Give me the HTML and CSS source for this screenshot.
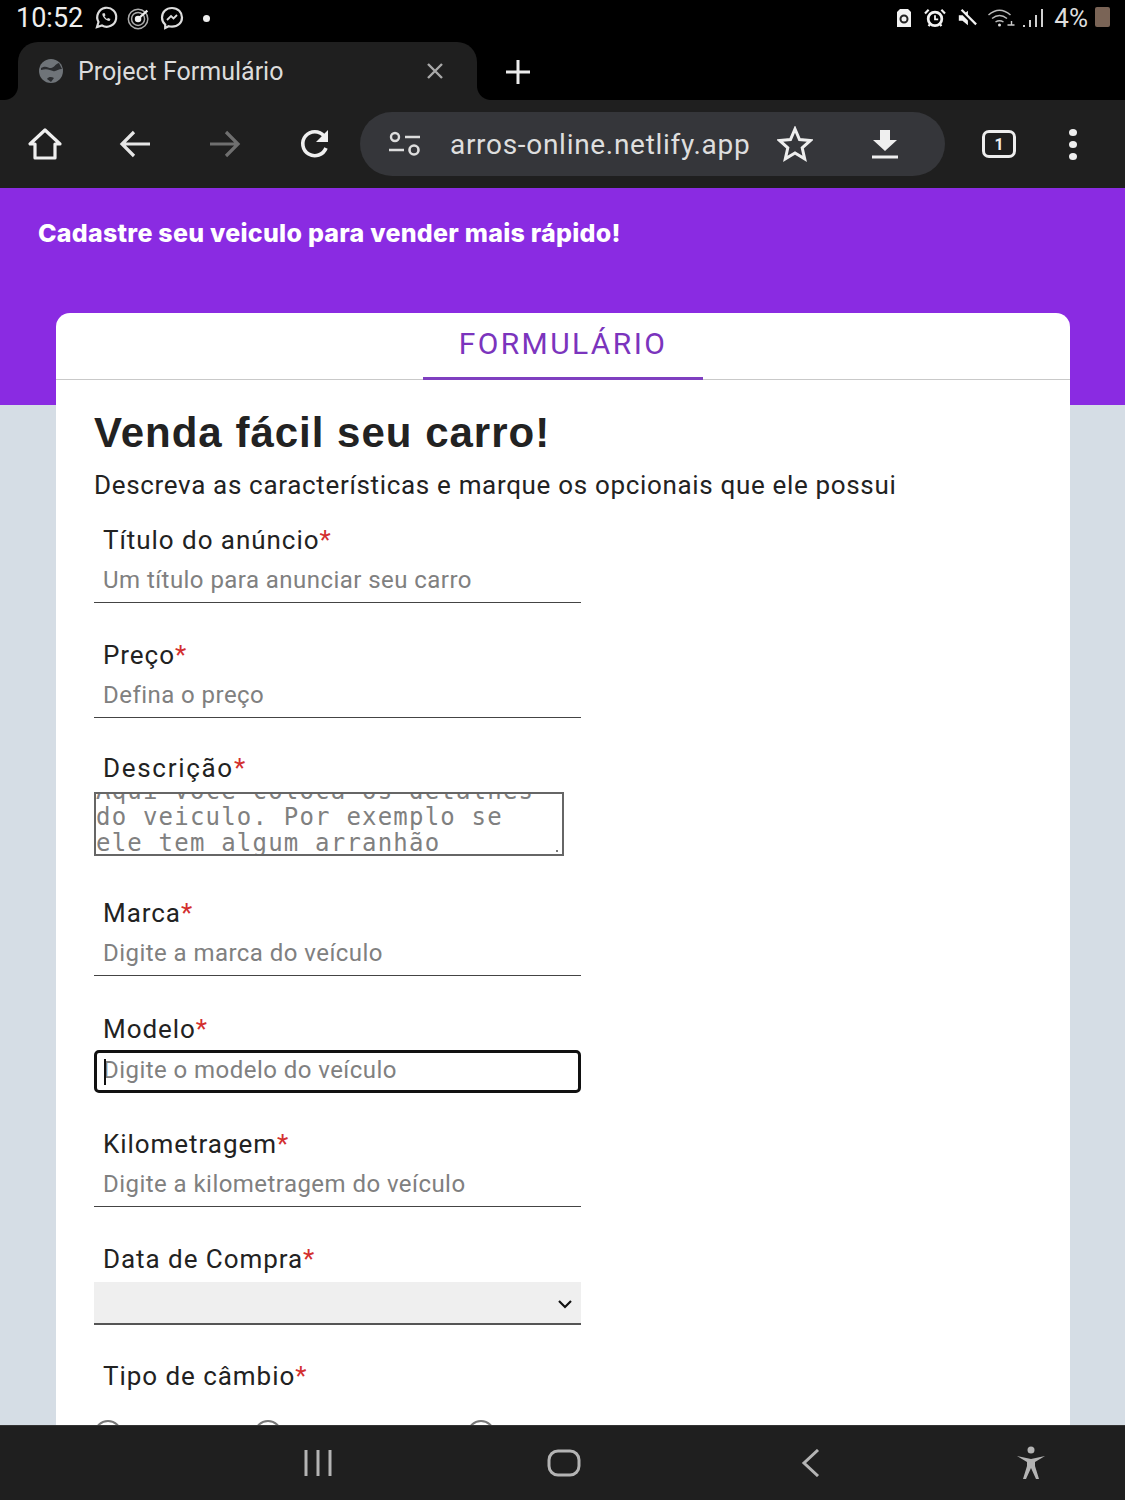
FILE: index.html
```html
<!DOCTYPE html>
<html lang="pt-BR">
<head>
<meta charset="utf-8">
<title>Project Formulário</title>
<link rel="stylesheet" href="styles.css">
</head>
<body>
<div class="screen">
  <header class="chrome">
    <div class="status">
      <div class="status-left">
        <span class="clock">10:52</span>
        <svg class="st-ic" viewBox="0 0 26 26"><path d="M4 22l1.500-5A9.500 9.500 0 1 1 9 20.500z" fill="none" stroke="#ddd" stroke-width="2.200"/><path d="M9.500 8.500c-1 2 3 7.500 7 7.500l1-2-2.500-1-1 1c-1-.5-2-1.500-2.500-2.700l1-1-1-2.300z" fill="#ddd"/></svg>
        <svg class="st-ic" viewBox="0 0 28 26"><circle cx="13" cy="14" r="10.500" fill="none" stroke="#aaa" stroke-width="1.600"/><circle cx="13" cy="14" r="7" fill="none" stroke="#aaa" stroke-width="1.600"/><circle cx="13" cy="14" r="3.500" fill="#eee"/><path d="M14 13l9-8" stroke="#eee" stroke-width="2.500"/></svg>
        <svg class="st-ic" viewBox="0 0 26 26"><path d="M13 3C7 3 3 7 3 12.500c0 3 1.200 5.300 3.200 7V23l3.500-1.800c1 .3 2.100.4 3.300.4 6 0 10-4 10-9.100S19 3 13 3z" fill="none" stroke="#ddd" stroke-width="2.200"/><path d="M8 15l4-4 2.500 2.500L18 10" fill="none" stroke="#ddd" stroke-width="1.800"/></svg>
        <span class="st-dot"></span>
      </div>
      <div class="status-right">
        <svg class="sr-ic" viewBox="0 0 18 20"><path d="M5 1h8l3 3v15H2V4z" fill="#f2f2f2"/><circle cx="9" cy="11" r="3.500" fill="none" stroke="#222" stroke-width="2"/></svg>
        <svg class="sr-ic sr-wide" viewBox="0 0 24 22"><circle cx="12" cy="12" r="7.500" fill="none" stroke="#f2f2f2" stroke-width="3"/><path d="M12 8v4.500h3.500" fill="none" stroke="#f2f2f2" stroke-width="2"/><path d="M1 6l4-4M23 6l-4-4M5 20l2-3M19 20l-2-3" stroke="#f2f2f2" stroke-width="2.400"/></svg>
        <svg class="sr-ic sr-wide" viewBox="0 0 24 22"><path d="M3 8h4l6-5v16l-6-5H3z" fill="#f2f2f2"/><path d="M4 2l18 18" stroke="#000" stroke-width="4"/><path d="M6 2l16 16" stroke="#f2f2f2" stroke-width="2.400"/></svg>
        <svg class="sr-ic sr-wifi" viewBox="0 0 28 20"><path d="M1 7c7-6 15-6 22 0M4.500 10.500c5-4 10-4 15 0M8 14c3-2 5-2 8 0" fill="none" stroke="#bbb" stroke-width="1.500"/><circle cx="12" cy="17" r="1.500" fill="#ddd"/><path d="M20 17h7M24 13v4" stroke="#ccc" stroke-width="1.400"/></svg>
        <svg class="sr-ic sr-sig" viewBox="0 0 22 20"><path d="M2 17v2M8 12v7M14 7v12M20 1v18" stroke="#d0d0d0" stroke-width="2"/></svg>
        <span class="battery-pct">4%</span>
        <span class="battery"></span>
      </div>
    </div>
    <div class="tabstrip">
      <div class="tab">
        <svg class="globe" viewBox="0 0 26 26"><circle cx="13" cy="13" r="12" fill="#6f7479"/><path d="M3 10c5-3 7 0 10 0s4-4 8-5l3 6c-4 0-6 3-9 2s-6-3-12-1zM9 21c2-3 5-2 7-1l-3 4z" fill="#2b2d30"/></svg>
        <span class="tab-title">Project Formulário</span>
        <svg class="tab-close" viewBox="0 0 20 20"><path d="M3 3l14 14M17 3L3 17" stroke="#a9a9a9" stroke-width="2.400"/></svg>
      </div>
      <svg class="tab-new" viewBox="0 0 26 26"><path d="M13 1v24M1 13h24" stroke="#ececec" stroke-width="3"/></svg>
    </div>
    <div class="toolbar">
      <svg class="tb-ic" viewBox="0 0 36 36"><path d="M18 4L3 18h5v14h20V18h5z" fill="none" stroke="#efefef" stroke-width="3.200" stroke-linejoin="round"/></svg>
      <svg class="tb-ic" viewBox="0 0 36 36"><path d="M33 18H5M17 6L5 18l12 12" fill="none" stroke="#e6e6e6" stroke-width="3.200"/></svg>
      <svg class="tb-ic" viewBox="0 0 36 36"><path d="M3 18h28M19 6l12 12-12 12" fill="none" stroke="#6f6f6f" stroke-width="3.200"/></svg>
      <svg class="tb-ic" viewBox="0 0 36 36"><path d="M29 22a12 12 0 1 1-2-12" fill="none" stroke="#efefef" stroke-width="3.600"/><path d="M31 4v12H19z" fill="#efefef"/></svg>
      <div class="omnibox">
        <svg class="tune" viewBox="0 0 36 26"><circle cx="8" cy="6" r="4" fill="none" stroke="#ddd" stroke-width="2.400"/><path d="M18 6h15M2 19h15" stroke="#ddd" stroke-width="2.400"/><circle cx="27" cy="19" r="4.500" fill="none" stroke="#ddd" stroke-width="2.600"/></svg>
        <span class="url">arros-online.netlify.app</span>
        <svg class="star" viewBox="0 0 36 36"><path d="M18 3l4.500 10.500 11 1-8.300 7.300 2.500 11L18 27l-9.700 5.800 2.500-11-8.300-7.300 11-1z" fill="none" stroke="#eee" stroke-width="3"/></svg>
        <svg class="download" viewBox="0 0 30 32"><path d="M10 2h10v10h7L15 23 3 12h7z" fill="#efefef"/><path d="M2 29h26" stroke="#efefef" stroke-width="3"/></svg>
      </div>
      <div class="tabs-count">1</div>
      <div class="kebab"><i></i><i></i><i></i></div>
    </div>
  </header>

  <main class="content">
    <div class="hero"><h2 class="hero-title">Cadastre seu veiculo para vender mais rápido!</h2></div>
    <section class="card">
      <div class="card-tabs"><div class="card-tab">FORMULÁRIO</div></div>
      <div class="card-body">
        <h1 class="title">Venda fácil seu carro!</h1>
        <p class="lead">Descreva as características e marque os opcionais que ele possui</p>
        <form class="form">
          <div class="field">
            <label class="label">Título do anúncio<span class="req">*</span></label>
            <input class="input" placeholder="Um título para anunciar seu carro">
          </div>
          <div class="field field-before-area">
            <label class="label">Preço<span class="req">*</span></label>
            <input class="input" placeholder="Defina o preço">
          </div>
          <div class="field field-area">
            <label class="label label-wide">Descrição<span class="req">*</span></label>
            <div class="textarea">
              <span>Aqui você coloca os detalhes</span>
              <span>do veiculo. Por exemplo se</span>
              <span class="textarea-last">ele tem algum arranhão</span>
              <i class="grip"></i>
            </div>
          </div>
          <div class="field field-marca">
            <label class="label">Marca<span class="req">*</span></label>
            <input class="input" placeholder="Digite a marca do veículo">
          </div>
          <div class="field field-focus">
            <label class="label">Modelo<span class="req">*</span></label>
            <div class="input input-focus"><i class="caret"></i><span>Digite o modelo do veículo</span></div>
          </div>
          <div class="field">
            <label class="label">Kilometragem<span class="req">*</span></label>
            <input class="input" placeholder="Digite a kilometragem do veículo">
          </div>
          <div class="field field-select">
            <label class="label">Data de Compra<span class="req">*</span></label>
            <div class="select">
              <svg class="chev" viewBox="0 0 16 10"><path d="M2 2l6 6 6-6" fill="none" stroke="#111" stroke-width="2.200"/></svg>
            </div>
          </div>
          <div class="field field-radio">
            <label class="label">Tipo de câmbio<span class="req">*</span></label>
            <div class="radios"><i class="radio"></i><i class="radio"></i><i class="radio"></i></div>
          </div>
        </form>
      </div>
    </section>
  </main>

  <nav class="navbar">
    <svg class="nav-ic nav-recent" viewBox="0 0 32 28"><path d="M4 1v26M16 1v26M28 1v26" stroke="#b4b4b4" stroke-width="3"/></svg>
    <svg class="nav-ic nav-home" viewBox="0 0 34 28"><rect x="2" y="2" width="30" height="24" rx="9" fill="none" stroke="#b4b4b4" stroke-width="3"/></svg>
    <svg class="nav-ic nav-back" viewBox="0 0 20 28"><path d="M17 1L3 14l14 13" fill="none" stroke="#b4b4b4" stroke-width="3"/></svg>
    <svg class="nav-ic nav-access" viewBox="0 0 30 34"><circle cx="15" cy="4" r="3.500" fill="#b4b4b4"/><path d="M1 10l14 3 14-3-10 6v4l4 13h-3l-5-11-5 11H7l4-13v-4z" fill="#b4b4b4"/></svg>
  </nav>
</div>
</body>
</html>
```
FILE: styles.css
```css
* { box-sizing: border-box; }
html, body { margin: 0; padding: 0; }
body { font-family: Roboto, "Liberation Sans", sans-serif; background: #000; }
.screen { width: 1125px; height: 1500px; display: flex; flex-direction: column; overflow: hidden; }

.chrome { height: 188px; flex: none; background: #000; display: flex; flex-direction: column; }
.status { height: 42px; display: flex; justify-content: space-between; align-items: center; padding: 0 15px 6px 16px; }
.status-left, .status-right { display: flex; align-items: center; }
.clock { color: #eee; font-size: 27px; margin-right: 10px; }
.st-ic { width: 26px; height: 26px; margin-right: 7px; }
.st-dot { width: 7px; height: 7px; border-radius: 50%; background: #eee; margin-left: 11px; }
.sr-ic { width: 18px; height: 20px; margin-right: 10px; }
.sr-wide { width: 24px; margin-right: 8px; }
.sr-wifi { width: 29px; margin-right: 6px; }
.sr-sig { width: 22px; margin-right: 10px; }
.battery-pct { color: #ddd; font-size: 26px; }
.battery { width: 15px; height: 20px; margin: 0 0 2px 7px; background: #7a6456; border-radius: 2px; }

.tabstrip { height: 58px; display: flex; align-items: flex-start; padding-left: 18px; }
.tab { position: relative; width: 459px; height: 58px; background: #1f1f1f; border-radius: 20px 20px 0 0; display: flex; align-items: center; padding: 0 32px 0 20px; }
.tab::before, .tab::after { content: ""; position: absolute; bottom: 0; width: 14px; height: 14px; }
.tab::before { left: -14px; background: radial-gradient(circle at 0 0, #000 13.500px, #1f1f1f 14.500px); }
.tab::after { right: -14px; background: radial-gradient(circle at 100% 0, #000 13.500px, #1f1f1f 14.500px); }
.globe { width: 26px; height: 26px; margin-right: 14px; }
.tab-title { color: #dcdcdc; font-size: 25px; flex: 1; }
.tab-close { width: 20px; height: 20px; }
.tab-new { width: 26px; height: 26px; margin: 17px 0 0 28px; }

.toolbar { height: 88px; background: #1f1f1f; display: flex; align-items: center; padding: 0 0 0 27px; }
.tb-ic { width: 36px; height: 36px; margin-right: 54px; }
.tb-ic:nth-child(4) { margin-right: 27px; }
.omnibox { width: 585px; height: 64px; border-radius: 32px; background: #35363a; display: flex; align-items: center; padding: 0 44px 0 27px; }
.tune { width: 36px; height: 26px; margin-right: 27px; }
.url { color: #dedede; font-size: 28px; letter-spacing: .7px; width: 300px; white-space: nowrap; }
.star { width: 36px; height: 36px; margin-left: 27px; }
.download { width: 30px; height: 32px; margin-left: 57px; }
.tabs-count { width: 34px; height: 28px; margin-left: 37px; border: 3px solid #eee; border-radius: 7px; color: #eee; font-size: 16px; font-weight: 700; display: flex; align-items: center; justify-content: center; }
.kebab { display: flex; flex-direction: column; gap: 5px; margin-left: 53px; }
.kebab i { width: 8px; height: 7px; border-radius: 50%; background: #eee; }

.content { flex: 1; min-height: 0; background: #d5dde5; overflow: hidden; }
.hero { height: 217px; background: #8a2be2; padding: 31px 38px; }
.hero-title { margin: 0; color: #fff; font-family: Inter, Roboto, sans-serif; font-size: 25px; line-height: 28px; font-weight: 800; letter-spacing: .25px; }
.card { margin: -92px 55px 0 56px; background: #fff; border-radius: 14px 14px 0 0; height: 1200px; }
.card-tabs { height: 67px; border-bottom: 1px solid #c9c9c9; display: flex; justify-content: center; }
.card-tab { width: 280px; height: 67px; border-bottom: 3px solid #7f3fc0; color: #7b34bd; font-size: 30px; line-height: 62px; letter-spacing: 2.400px; text-align: center; }
.card-body { padding: 27px 38px 0; }
.title { margin: 0; color: #222; font-family: "Liberation Sans", Arial, sans-serif; font-size: 42px; line-height: 52px; font-weight: 700; letter-spacing: 1px; }
.lead { margin: 11px 0 0; color: #222; font-size: 26px; line-height: 30px; letter-spacing: .67px; }
.form { margin-top: 28px; }

.field { width: 487px; margin-bottom: 40px; }
.label { display: block; color: #222; font-size: 26px; line-height: 24px; padding-left: 9px; letter-spacing: .95px; }
.label-wide { letter-spacing: 1.700px; }
.req { color: #d32f2f; }
.input { display: block; width: 100%; height: 42px; margin-top: 9px; border: 0; border-bottom: 1px solid #444; background: transparent; padding: 0 9px 4px; font: 24px Roboto, sans-serif; letter-spacing: .45px; color: #808080; outline: 0; }
.input::placeholder { color: #808080; opacity: 1; }

.field-before-area { margin-bottom: 38px; }
.field-area { margin-bottom: 45px; }
.field-marca { margin-bottom: 41px; }
.textarea { position: relative; width: 470px; height: 64px; margin-top: 12px; border: 2px solid #666; overflow: hidden; display: flex; flex-direction: column; justify-content: flex-end; font-family: "DejaVu Sans Mono", "Liberation Mono", monospace; font-size: 24px; line-height: 26px; color: #808080; letter-spacing: 1.200px; }
.textarea span { white-space: nowrap; }
.textarea-last { margin-bottom: -2px; }
.grip { position: absolute; right: 4px; bottom: 2px; width: 2px; height: 2px; background: #777; }

.input-focus { position: relative; height: 43px; border: 3px solid #111; border-radius: 5px; padding: 0 6px 4px; display: flex; align-items: center; }
.caret { position: absolute; left: 7px; top: 6px; width: 2px; height: 26px; background: #111; }
.field-focus { margin-bottom: 39px; }
.field-select { margin-bottom: 39px; }
.select { position: relative; height: 43px; margin-top: 11px; background: #efefef; border-bottom: 2px solid #555; }
.chev { position: absolute; right: 8px; top: 17px; width: 16px; height: 10px; }
.radios { display: flex; margin-top: 32px; }
.radio { width: 28px; height: 28px; border: 2px solid #777; border-radius: 50%; }
.radio:nth-child(2) { margin-left: 132px; }
.radio:nth-child(3) { margin-left: 185px; }

.navbar { position: relative; height: 75px; flex: none; background: #1f1f1f; border-top: 1px solid #333; z-index: 1; display: flex; align-items: center; }
.nav-ic { height: 28px; }
.nav-recent { width: 32px; margin-left: 302px; }
.nav-home { width: 34px; margin-left: 213px; }
.nav-back { width: 20px; margin-left: 220px; }
.nav-access { width: 30px; height: 34px; margin-left: 195px; }
```
